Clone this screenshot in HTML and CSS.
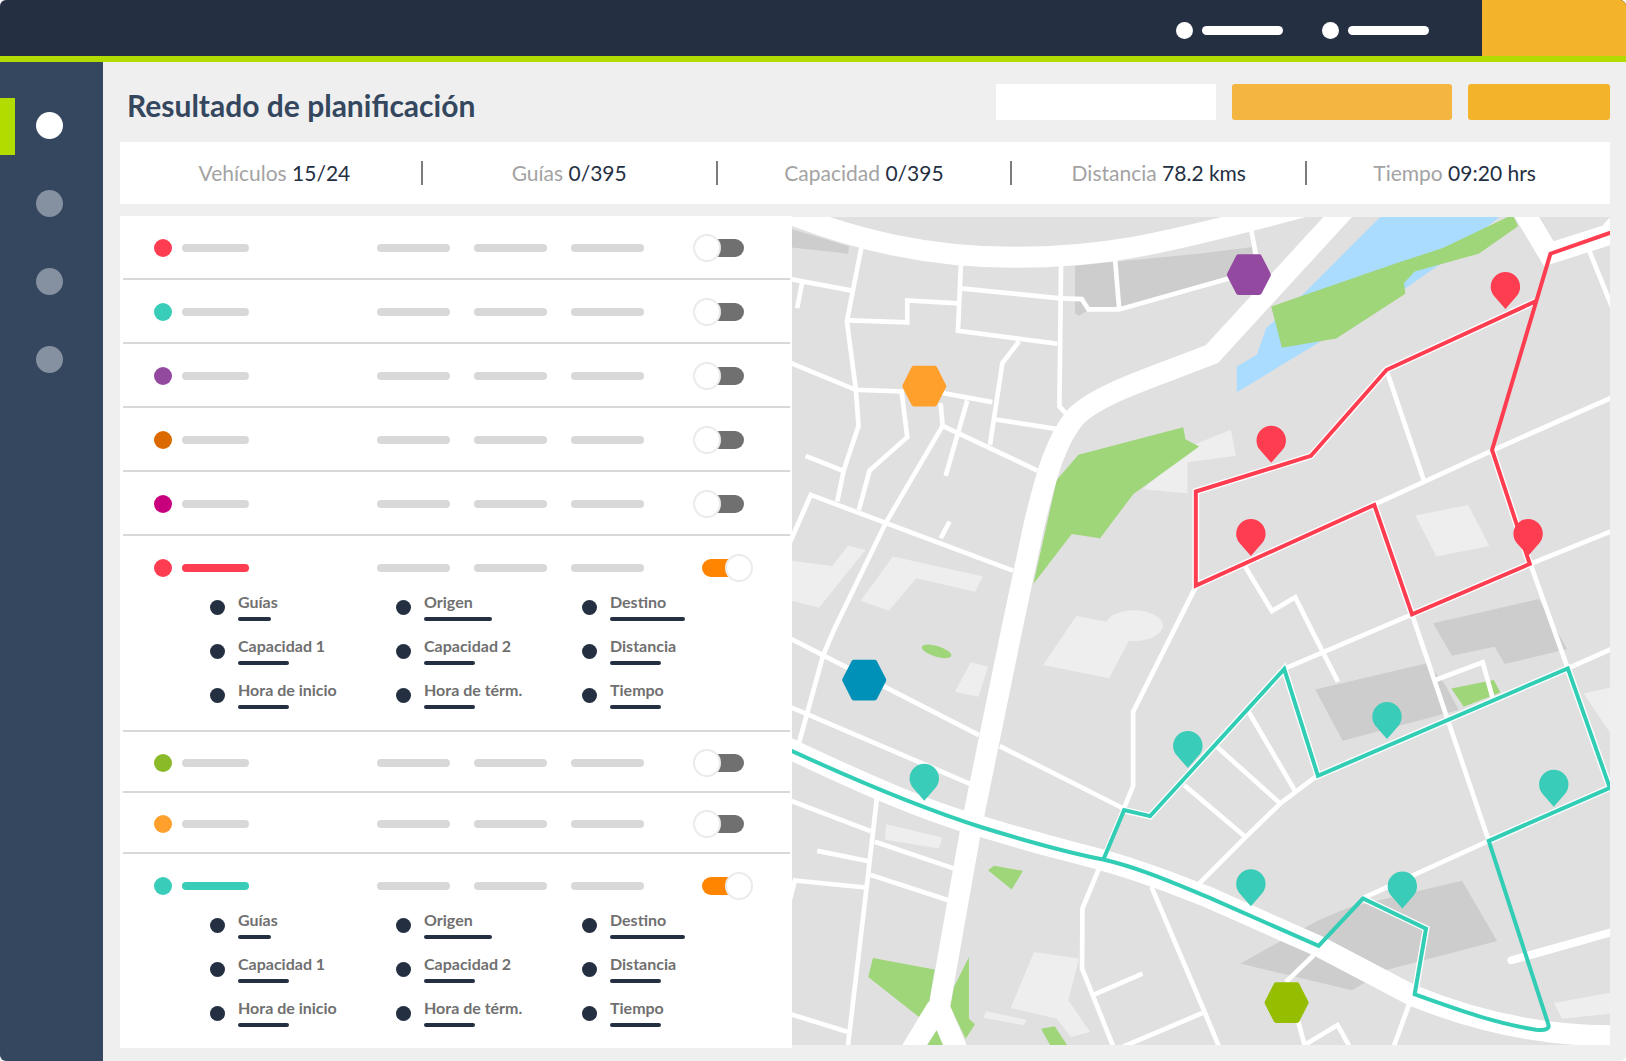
FILE: index.html
```html
<!DOCTYPE html>
<html lang="es">
<head>
    <meta charset="UTF-8">
    <meta name="viewport" content="width=device-width, initial-scale=1.0">
    <title>Resultado de planificación</title>
    <link rel="stylesheet" href="styles.css">
</head>
<body>
    <div class="app">
        <header class="topbar">
            <nav class="top-links">
                <a href="#" class="top-link" aria-label="Cuenta"><span class="top-dot"></span><span class="top-line"></span></a>
                <a href="#" class="top-link" aria-label="Ayuda"><span class="top-dot"></span><span class="top-line"></span></a>
            </nav>
            <button class="top-action" aria-label="Menú"></button>
        </header>

        <div class="layout">
            <nav class="sidebar">
                <a href="#" class="side-link active" aria-label="Planificación"></a>
                <a href="#" class="side-link" aria-label="Vehículos"></a>
                <a href="#" class="side-link" aria-label="Guías"></a>
                <a href="#" class="side-link" aria-label="Reportes"></a>
            </nav>

            <main class="content">
                <div class="page-head">
                    <h1>Resultado de planificación</h1>
                    <div class="actions">
                        <input type="text" class="search" aria-label="Buscar">
                        <button class="btn btn-wide" aria-label="Replanificar"></button>
                        <button class="btn" aria-label="Guardar"></button>
                    </div>
                </div>

                <div class="stats">
                    <div class="stat">Vehículos <strong>15/24</strong></div>
                    <div class="stat">Guías <strong>0/395</strong></div>
                    <div class="stat">Capacidad <strong>0/395</strong></div>
                    <div class="stat">Distancia <strong>78.2 kms</strong></div>
                    <div class="stat">Tiempo <strong>09:20 hrs</strong></div>
                </div>

                <div class="panels">
                    <div class="routes">
                        <div class="route red">
                            <div class="route-head">
                                <span class="dot"></span><span class="name"></span>
                                <span class="metric"></span><span class="metric"></span><span class="metric"></span>
                                <input type="checkbox" class="toggle" aria-label="Ruta 1">
                            </div>
                        </div>
                        <div class="route teal">
                            <div class="route-head">
                                <span class="dot"></span><span class="name"></span>
                                <span class="metric"></span><span class="metric"></span><span class="metric"></span>
                                <input type="checkbox" class="toggle" aria-label="Ruta 2">
                            </div>
                        </div>
                        <div class="route purple">
                            <div class="route-head">
                                <span class="dot"></span><span class="name"></span>
                                <span class="metric"></span><span class="metric"></span><span class="metric"></span>
                                <input type="checkbox" class="toggle" aria-label="Ruta 3">
                            </div>
                        </div>
                        <div class="route brown">
                            <div class="route-head">
                                <span class="dot"></span><span class="name"></span>
                                <span class="metric"></span><span class="metric"></span><span class="metric"></span>
                                <input type="checkbox" class="toggle" aria-label="Ruta 4">
                            </div>
                        </div>
                        <div class="route magenta">
                            <div class="route-head">
                                <span class="dot"></span><span class="name"></span>
                                <span class="metric"></span><span class="metric"></span><span class="metric"></span>
                                <input type="checkbox" class="toggle" aria-label="Ruta 5">
                            </div>
                        </div>
                        <div class="route red open">
                            <div class="route-head">
                                <span class="dot"></span><span class="name"></span>
                                <span class="metric"></span><span class="metric"></span><span class="metric"></span>
                                <input type="checkbox" class="toggle" aria-label="Ruta 6" checked>
                            </div>
                            <ul class="details">
                                <li class="short">Guías</li>
                                <li class="long">Origen</li>
                                <li class="longer">Destino</li>
                                <li>Capacidad 1</li>
                                <li>Capacidad 2</li>
                                <li>Distancia</li>
                                <li>Hora de inicio</li>
                                <li>Hora de térm.</li>
                                <li>Tiempo</li>
                            </ul>
                        </div>
                        <div class="route green compact">
                            <div class="route-head">
                                <span class="dot"></span><span class="name"></span>
                                <span class="metric"></span><span class="metric"></span><span class="metric"></span>
                                <input type="checkbox" class="toggle" aria-label="Ruta 7">
                            </div>
                        </div>
                        <div class="route orange compact">
                            <div class="route-head">
                                <span class="dot"></span><span class="name"></span>
                                <span class="metric"></span><span class="metric"></span><span class="metric"></span>
                                <input type="checkbox" class="toggle" aria-label="Ruta 8">
                            </div>
                        </div>
                        <div class="route teal open">
                            <div class="route-head">
                                <span class="dot"></span><span class="name"></span>
                                <span class="metric"></span><span class="metric"></span><span class="metric"></span>
                                <input type="checkbox" class="toggle" aria-label="Ruta 9" checked>
                            </div>
                            <ul class="details">
                                <li class="short">Guías</li>
                                <li class="long">Origen</li>
                                <li class="longer">Destino</li>
                                <li>Capacidad 1</li>
                                <li>Capacidad 2</li>
                                <li>Distancia</li>
                                <li>Hora de inicio</li>
                                <li>Hora de térm.</li>
                                <li>Tiempo</li>
                            </ul>
                        </div>
                    </div>

                    <div class="map">
                        <svg viewBox="8 22 2455 2482" preserveAspectRatio="xMidYMid slice" role="img" aria-label="Mapa de rutas">
                            <defs>
                                <path id="pin" d="M0 67 L-34 28 A44 44 0 1 1 34 28 Z"/>
                                <path id="hub" d="M-58 0 L-31 -53 H31 L58 0 L31 53 H-31 Z"/>
                            </defs>

                            <!-- blocks -->
                            <g class="block-dark">
                                <path d="M8 58 L180 110 L178 132 L8 113 Z"/>
                                <path d="M858 168 L1248 130 L1390 112 L1390 160 L1320 200 L985 295 L900 300 L870 318 L858 312 Z"/>
                                <path d="M1931 1240 L2248 1167 L2333 1317 L2146 1362 L2116 1310 L1988 1337 Z"/>
                                <path d="M1578 1438 L1913 1360 L1965 1420 L2008 1500 L1660 1592 Z"/>
                                <path d="M1353 2260 L1588 2130 L1678 2092 L2018 2012 L2123 2192 L1788 2280 L1688 2340 Z"/>
                            </g>
                            <g class="block-light">
                                <path d="M8 1052 L130 1068 L178 1007 L230 1020 L90 1193 L8 1172 Z"/>
                                <path d="M312 1040 L582 1100 L558 1145 L382 1105 L300 1202 L215 1172 Z"/>
                                <path d="M1225 700 L1325 660 L1340 738 L1195 757 L1195 850 L1060 838 Z"/>
                                <path d="M862 1218 L960 1237 L1060 1250 L1018 1295 L960 1405 L762 1365 Z"/>
                                <ellipse cx="1035" cy="1247" rx="86" ry="46"/>
                                <path d="M545 1357 L598 1370 L568 1460 L498 1445 Z"/>
                                <path d="M292 1842 L460 1882 L450 1915 L288 1888 Z"/>
                                <path d="M735 2225 L870 2245 L838 2370 L903 2465 L845 2480 L803 2425 L665 2393 Z"/>
                                <path d="M592 2403 L712 2428 L705 2445 L583 2422 Z"/>
                                <path d="M1878 917 L2036 885 L2100 1008 L1941 1040 Z"/>
                                <path d="M2383 1450 L2463 1432 L2463 1570 Z"/>
                                <path d="M2293 2378 L2463 2347 L2463 2410 L2318 2425 Z"/>
                            </g>
                            <path class="water" d="M1773 22 H2130 L1950 165 L1850 235 L1578 405 L1343 547 V470 L1403 435 L1431 355 L1460 330 L1550 245 Z"/>
                            <g class="park">
                                <path d="M868 735 L1182 652 L1189 688 L1230 710 L1033 852 L933 985 L848 972 L733 1122 L803 810 Z"/>
                                <path d="M1446 290 L1823 160 L1960 115 L2155 22 H2173 L2186 50 L2068 132 L1876 185 L1844 220 L1848 252 L1641 386 L1478 414 Z"/>
                                <ellipse cx="443" cy="1324" rx="46" ry="16" transform="rotate(17 443 1324)"/>
                                <path d="M597 1980 L615 1967 L702 1982 L668 2038 Z"/>
                                <path d="M252 2243 L437 2278 L420 2378 L390 2420 L238 2300 Z"/>
                                <path d="M540 2240 V2425 L558 2442 L530 2485 L484 2390 L495 2330 Z"/>
                                <path d="M756 2455 L797 2448 L834 2504 H783 Z"/>
                                <path d="M1986 1435 L2113 1410 L2133 1447 L2023 1490 Z"/>
                            </g>

                            <!-- streets -->
                            <g class="street">
                                <path d="M218 110 L174 335 L201 540 L209 648 L165 780 L145 875"/>
                                <path d="M0 207 L185 242 M40 218 L25 295 M180 332 L355 338 V272 L510 281"/>
                                <path d="M516 160 L507 363 L805 402 M516 236 L815 266 L878 268 L898 299 H990 L1340 200 M978 150 L990 295"/>
                                <path d="M816 165 L811 590 L835 615 M690 395 L640 460 L603 705"/>
                                <path d="M0 457 L200 540 L338 545 L355 682 L242 782 L210 900"/>
                                <path d="M440 546 L610 577 M535 572 L470 798 M455 580 L461 648 L290 940 L135 1260 L103 1335 L30 1600"/>
                                <path d="M461 648 L745 782 M620 629 L800 657 M50 738 L160 782 M0 1005 L66 855 L672 1082 M482 935 L455 985"/>
                                <path d="M1386 60 L1400 135 M2398 120 L2468 293 M1793 485 L1903 810 M1753 885 L2108 722 L2470 562"/>
                                <path d="M2223 1062 L2470 962 M2223 1062 L2335 1375 L2470 1315 M1868 1213 L2098 1892 L1718 2065 M1868 1213 L1488 1375"/>
                                <path d="M1368 1070 L1448 1203 L1518 1162 L1568 1262 L1646 1415"/>
                                <path d="M1220 1130 L1032 1505 V1728 L940 1950 L880 2095 L879 2275 L975 2515"/>
                                <path d="M0 1283 L570 1575 M0 1489 L545 1722 M632 1608 L1003 1795 M0 1770 L245 1863"/>
                                <path d="M265 1755 L238 1990 L176 2515 M85 1922 L240 1953 M0 2080 L18 2011 L230 2032 M258 1895 L498 1976 M245 1994 L478 2070 M0 2410 L175 2464"/>
                                <path d="M1087 2030 L1240 2390 L1292 2515 M915 2353 L1060 2290 M1000 2510 L1240 2408"/>
                                <path d="M1185 1725 L1368 1880 M1230 2020 L1373 1877 L1473 1780 L1586 1695 M1283 1610 L1473 1780 M1378 1505 L1516 1740"/>
                                <path d="M1938 1410 L2080 1357 L2110 1465 M1573 2235 L1490 2315 M1526 2430 L1546 2504 L1645 2444 L1684 2515 M1860 2380 L1811 2515"/>
                            </g>
                            <g class="avenue">
                                <path d="M-40 -5 C200 95 430 143 680 143 S1090 110 1480 8 L1600 -24"/>
                                <path d="M1670 -5 L1268 433 C1100 500 930 550 860 620 C800 690 770 800 735 945 L668 1260 L545 1860 L451 2390"/>
                                <path d="M-20 1605 C200 1710 400 1800 580 1850 C760 1905 850 1925 940 1950 C1100 1995 1200 2040 1248 2057 L1588 2208 L1868 2355 C2050 2430 2250 2478 2480 2476"/>
                                <path d="M2193 -10 L2278 132 L2480 68"/>
                            </g>
                            <path class="road" d="M418 2375 L340 2504 H415 L443 2460 L462 2504 H533 L484 2388 Z"/>
                            <path class="park" d="M443 2460 L462 2504 H415 Z"/>
                            <path class="road" d="M2430 70 L2445 40 L2463 22 V80 Z"/>
                            <path class="lane" d="M2166 2250 L2480 2162"/>

                            <!-- routes -->
                            <g class="casing">
                                <path d="M2238 275 L1792 480 L1565 738 L1220 845 V1127 L1755 885 L1868 1213 L2221 1062 L2108 720"/>
                                <path d="M2098 1892 L2461 1733 L2335 1375 L1586 1697 L1485 1377 L1083 1818 L1005 1800 M1721 2065 L1910 2155 L1876 2352"/>
                            </g>
                            <path class="line line-red" d="M2461 70 L2283 132 L2108 720 L2221 1062 L1868 1213 L1755 885 L1220 1127 V845 L1565 738 L1792 480 L2238 275"/>
                            <path class="line line-teal" d="M8 1622 C210 1715 400 1795 580 1852 C720 1895 850 1930 943 1948 C1060 1975 1180 2030 1260 2062 L1588 2207 L1721 2065 L1910 2155 L1876 2352 C2010 2400 2120 2440 2240 2458 Q2285 2463 2276 2440 L2098 1892 L2461 1733 L2335 1375 L1586 1697 L1485 1377 L1083 1818 L1005 1800 L943 1948"/>

                            <!-- stops -->
                            <g class="pin-red">
                                <use href="#pin" x="2148" y="231"/>
                                <use href="#pin" x="1446" y="692"/>
                                <use href="#pin" x="1385" y="971"/>
                                <use href="#pin" x="2216" y="971"/>
                            </g>
                            <g class="pin-teal">
                                <use href="#pin" x="406" y="1705"/>
                                <use href="#pin" x="1196" y="1607"/>
                                <use href="#pin" x="1793" y="1520"/>
                                <use href="#pin" x="2293" y="1723"/>
                                <use href="#pin" x="1385" y="2021"/>
                                <use href="#pin" x="1839" y="2028"/>
                            </g>

                            <!-- depots -->
                            <use class="hub hub-purple" href="#hub" x="1379" y="195"/>
                            <use class="hub hub-orange" href="#hub" x="406" y="529"/>
                            <use class="hub hub-blue" href="#hub" x="226" y="1410"/>
                            <use class="hub hub-green" href="#hub" x="1492" y="2377"/>
                        </svg>
                    </div>
                </div>
            </main>
        </div>
    </div>
</body>
</html>
```
FILE: styles.css
```css
:root {
    --navy: #242f42;
    --slate: #34475f;
    --lime: #b2dc00;
    --amber: #f3b42b;
    --bg: #efefef;
    --line: #d8d8d8;
    --red: #ff3d51;
    --teal: #39ccb8;
    --purple: #9349a0;
    --orange: #ff9f2c;
}

*, *::before, *::after { box-sizing: border-box; margin: 0; padding: 0; }

body {
    font-family: Lato, sans-serif;
    background: #fff;
    color: var(--navy);
}

.app {
    min-height: 100vh;
    display: flex;
    flex-direction: column;
    background: var(--bg);
    border-radius: 6px;
    overflow: hidden;
}

button {
    border: none;
    cursor: pointer;
}

/* top bar */
.topbar {
    display: flex;
    justify-content: flex-end;
    height: 62px;
    background: var(--navy);
    border-bottom: 6px solid var(--lime);
}

.top-links {
    display: flex;
    align-items: center;
    gap: 39px;
    padding: 5px 53px 0 0;
}

.top-link {
    display: flex;
    align-items: center;
    gap: 9px;
}

.top-dot {
    width: 17px;
    height: 17px;
    border-radius: 50%;
    background: #fff;
}

.top-line {
    width: 81px;
    height: 9px;
    border-radius: 5px;
    background: #fff;
}

.top-action {
    width: 144px;
    background: var(--amber);
}

.layout {
    flex-grow: 1;
    display: flex;
}

/* sidebar */
.sidebar {
    flex: 0 0 103px;
    display: flex;
    flex-direction: column;
    gap: 21px;
    padding-top: 36px;
    background: var(--slate);
}

.side-link {
    display: block;
    height: 57px;
    padding: 14px 0 0 36px;
}

.side-link::before {
    content: '';
    display: block;
    width: 27px;
    height: 27px;
    border-radius: 50%;
    background: #8591a1;
}

.side-link.active {
    padding-left: 21px;
    border-left: 15px solid var(--lime);
}

.side-link.active::before { background: #fff; }

.content {
    flex-grow: 1;
    min-width: 0;
    display: flex;
    flex-direction: column;
    padding: 22px 16px 13px 17px;
}

.page-head {
    display: flex;
    justify-content: space-between;
    align-items: center;
    height: 36px;
    margin-bottom: 22px;
    padding-left: 7px;
}

h1 {
    padding-top: 6px;
    font-size: 30px;
    line-height: 36px;
    font-weight: 700;
    color: var(--slate);
}

.actions {
    display: flex;
    gap: 16px;
}

.search {
    width: 220px;
    height: 36px;
    padding: 0 12px;
    border: none;
    font: 16px Lato, sans-serif;
    background: #fff;
}

.btn {
    width: 142px;
    height: 36px;
    border-radius: 3px;
    background: var(--amber);
}

.btn-wide {
    width: 220px;
    background: #f4b640;
}

/* summary */
.stats {
    display: grid;
    grid-template-columns: repeat(5, 1fr);
    align-items: center;
    height: 62px;
    margin-bottom: 12px;
    padding: 0 8px;
    background: #fff;
}

.stat {
    font-size: 21px;
    line-height: 24px;
    text-align: center;
    color: #a3a3a3;
    border-right: 2px solid #7c7c7c;
}

.stat:last-child { border-right: none; }

.stat strong {
    font-weight: 400;
    color: var(--navy);
}

.panels {
    flex-grow: 1;
    display: grid;
    grid-template-columns: 672fr 818fr;
}

/* route list */
.routes { background: #fff; }

.route {
    --color: var(--line);
    margin: 0 2px 0 3px;
    border-bottom: 2px solid var(--line);
}

.route:last-child { border-bottom: none; }

.route.red { --color: var(--red); }
.route.teal { --color: var(--teal); }
.route.purple { --color: var(--purple); }
.route.brown { --color: #dc6900; }
.route.magenta { --color: #c9007e; }
.route.green { --color: #8aba28; }
.route.orange { --color: var(--orange); }

.route-head {
    display: flex;
    align-items: center;
    height: 62px;
    padding: 2px 46px 0 31px;
}

.compact .route-head { height: 59px; }

.dot {
    width: 18px;
    height: 18px;
    margin-right: 10px;
    border-radius: 50%;
    background: var(--color);
}

.name {
    width: 67px;
    height: 8px;
    margin-right: auto;
    border-radius: 4px;
    background: var(--line);
}

.open .name { background: var(--color); }

.metric {
    width: 73px;
    height: 8px;
    margin-right: 24px;
    border-radius: 4px;
    background: var(--line);
}

.toggle {
    appearance: none;
    position: relative;
    width: 42px;
    height: 18px;
    margin-left: 34px;
    border-radius: 9px;
    background: #707070;
    cursor: pointer;
}

/* knob hangs over the ends of the track */
.toggle::before {
    content: '';
    position: absolute;
    top: -5px;
    left: -9px;
    width: 28px;
    height: 28px;
    border: 2px solid #ebebeb;
    border-radius: 50%;
    background: #fff;
}

.toggle:checked { background: #ff8500; }
.toggle:checked::before { left: 23px; }

.details {
    display: grid;
    grid-template-columns: repeat(3, 1fr);
    list-style: none;
    height: 138px;
    margin-top: -6px;
    padding: 0 22px 6px 87px;
}

.details li {
    position: relative;
    height: 44px;
    padding-left: 28px;
    font-size: 16px;
    line-height: 20px;
    font-weight: 700;
    color: #707070;
}

.details li::before {
    content: '';
    position: absolute;
    top: 8px;
    left: 0;
    width: 15px;
    height: 15px;
    border-radius: 50%;
    background: var(--navy);
}

.details li::after {
    content: '';
    display: block;
    width: 51px;
    height: 4px;
    margin-top: 5px;
    border-radius: 2px;
    background: var(--navy);
}

.details .short::after { width: 33px; }
.details .long::after { width: 68px; }
.details .longer::after { width: 75px; }

/* map */
.map {
    margin: 1px 0 3px;
    background: #e0e0e0;
}

.map svg {
    display: block;
    width: 100%;
    height: 100%;
}

.block-dark { fill: #cdcdcd; }
.block-light { fill: #eee; }
.water { fill: #a9dcff; }
.park { fill: #a0d67a; }
.road { fill: #fff; }

.street, .avenue, .lane, .casing, .line {
    fill: none;
    stroke: #fff;
}

.street { stroke-width: 14; }
.avenue { stroke-width: 63; }
.lane { stroke-width: 24; stroke-linecap: round; }
.casing { stroke-width: 20; }
.line { stroke-width: 12; stroke-linecap: round; }
.line-red { stroke: var(--red); }
.line-teal { stroke: #32cdb5; }
.pin-red { fill: var(--red); }
.pin-teal { fill: var(--teal); }

.hub {
    stroke-width: 16;
    stroke-linejoin: round;
}

.hub-purple { fill: var(--purple); stroke: var(--purple); }
.hub-orange { fill: var(--orange); stroke: var(--orange); }
.hub-blue { fill: #0091b9; stroke: #0091b9; }
.hub-green { fill: #95be00; stroke: #95be00; }
```
